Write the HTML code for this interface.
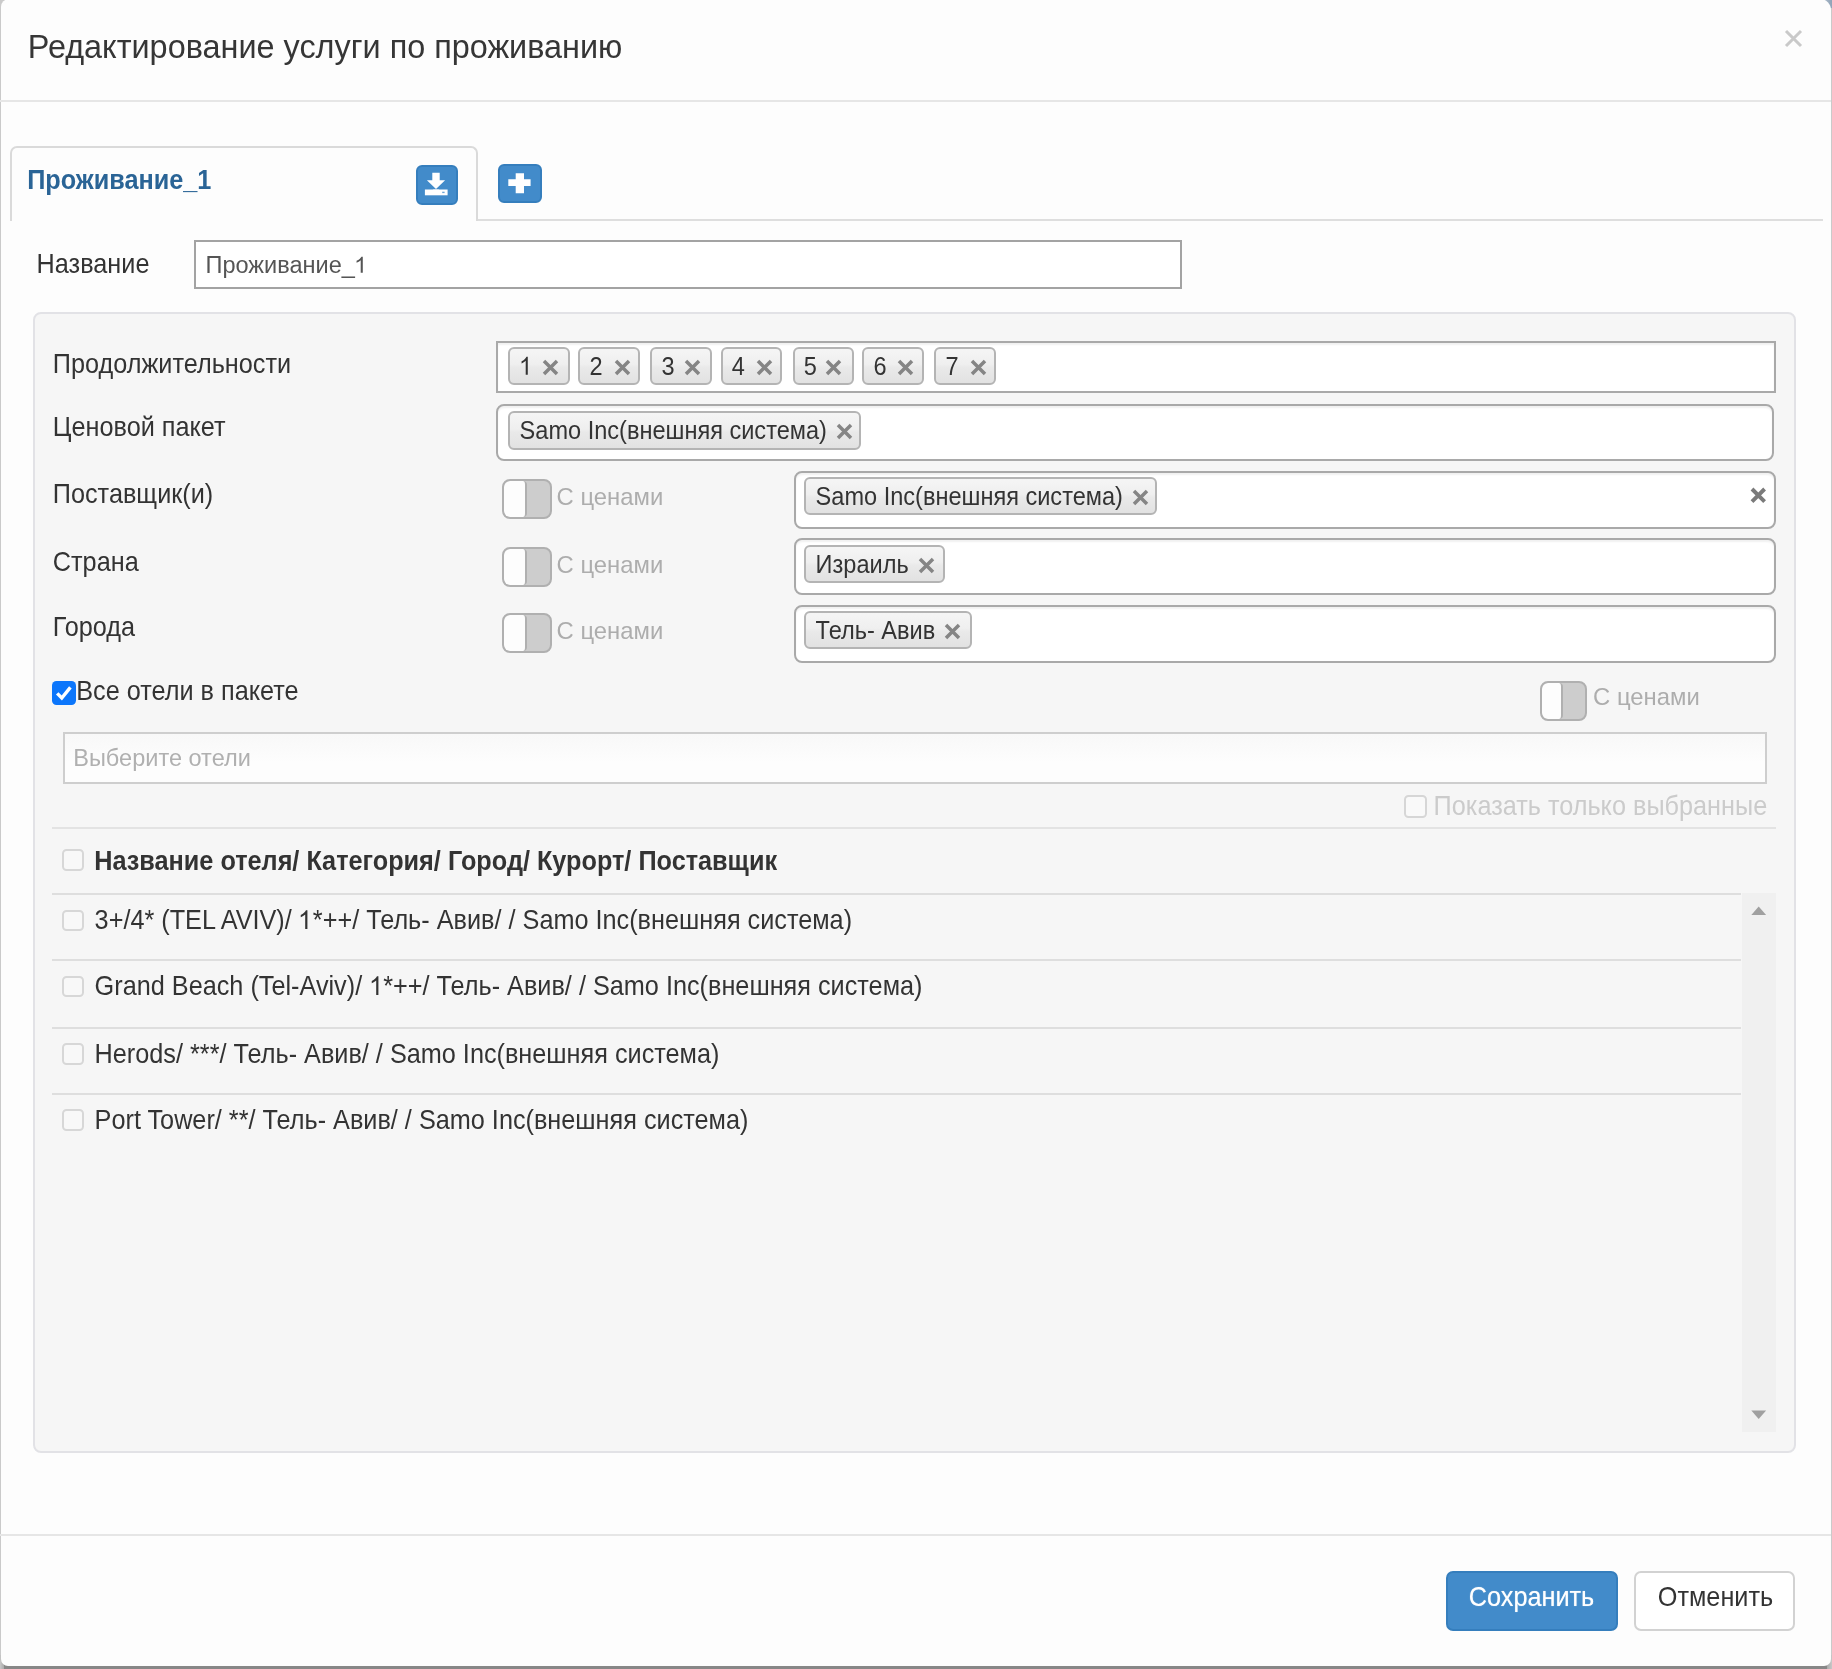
<!DOCTYPE html>
<html lang="ru"><head><meta charset="utf-8"><title>Редактирование услуги по проживанию</title><style>
html,body{margin:0;padding:0;width:1832px;height:1669px;overflow:hidden}
body{width:1832px;height:1669px;overflow:hidden;position:relative;background:#878787;font-family:"Liberation Sans",sans-serif}
.modal{position:absolute;left:1.2px;top:-1px;width:1829.5px;height:1667.3px;background:#fdfdfd;border-radius:8px 11px 7px 7px}
#clip{position:absolute;left:0;top:0;width:1832px;height:1669px;overflow:hidden}
#stage{position:absolute;left:-12px;top:-12px;width:1856px;height:1693px;filter:blur(0.7px)}
#inner{position:absolute;left:12px;top:12px;width:1832px;height:1669px}
.t{position:absolute;white-space:nowrap;line-height:1}
.b{position:absolute;display:block}
</style></head>
<body><div id="clip"><div id="stage"><div id="inner">
<div class="b" style="left:-12px;top:-12px;width:1856px;height:1693px;background:#878787"></div>
<div class="b" style="left:-12px;top:-12px;width:1856px;height:1673px;background:#cacaca"></div>
<div class="b" style="left:0;top:1655px;width:4px;height:14px;background:linear-gradient(90deg,#c8c8c8,#aaa)"></div>
<div class="b" style="left:1827px;top:1655px;width:5px;height:14px;background:linear-gradient(90deg,#aaa,#c8c8c8)"></div>
<div class="b" style="left:1818px;top:0;width:14px;height:8px;background:linear-gradient(90deg,#c4ccd4,#8fa3b8)"></div>
<div class="modal"></div>
<span class="t" style="left:27.70px;top:31.36px;font-size:32.41px;color:#363636;font-weight:normal;transform:scaleY(1.035);transform-origin:0 27.44px;">Редактирование услуги по проживанию</span>
<svg class="b" style="left:1782.10px;top:27.30px" width="23.00" height="23.00" viewBox="-11.50 -11.50 23.00 23.00"><path d="M-7.5 -7.5L7.5 7.5M7.5 -7.5L-7.5 7.5" stroke="#c9c9c9" stroke-width="3.0" fill="none" stroke-linecap="butt"/></svg>
<div class="b" style="left:0.00px;top:100.00px;width:1831.00px;height:2.00px;background:#e6e6e6"></div>
<div class="b" style="left:11.00px;top:219.00px;width:1812.00px;height:2.00px;background:#dedede"></div>
<div class="b" style="left:10.40px;top:145.50px;width:467.30px;height:75.60px;border:2px solid #dadada;border-bottom:0;border-radius:7px 7px 0 0;background:#fdfdfd;box-sizing:border-box"></div>
<span class="t" style="left:27.20px;top:167.63px;font-size:25.25px;color:#2a6496;font-weight:bold;transform:scaleY(1.095);transform-origin:0 21.37px;">Проживание_1</span>
<div class="b" style="left:416.20px;top:165.30px;width:41.90px;height:39.80px;background:#428bca;border:2px solid #357ebd;border-radius:6px;box-sizing:border-box"></div>
<div class="b" style="left:498.20px;top:163.50px;width:43.90px;height:39.50px;background:#428bca;border:2px solid #357ebd;border-radius:6px;box-sizing:border-box"></div>
<span class="t" style="left:36.60px;top:251.63px;font-size:25.25px;color:#333;font-weight:normal;transform:scaleY(1.095);transform-origin:0 21.37px;">Название</span>
<div class="b" style="left:194.20px;top:240.20px;width:987.80px;height:48.40px;border:2px solid #a3a3a3;background:#fff;box-sizing:border-box"></div>
<span class="t" style="left:205.50px;top:253.56px;font-size:23.55px;color:#555;font-weight:normal;transform:scaleY(1.01);transform-origin:0 19.94px;">Проживание_<svg style="display:inline-block;width:0.556em;height:0.672em;vertical-align:baseline;overflow:visible;margin-left:-0.02em;margin-right:0.02em" viewBox="0 -719 556 719" preserveAspectRatio="none"><path d="M373 0H285V-560Q253 -530 202 -500Q150 -469 109 -454V-539Q183 -574 238 -623Q293 -672 316 -719H373Z" fill="currentColor"/></svg></span>
<div class="b" style="left:33.00px;top:311.60px;width:1763.00px;height:1141.00px;background:#f6f6f6;border:2px solid #e2e2e6;border-radius:8px;box-sizing:border-box"></div>
<span class="t" style="left:52.80px;top:351.73px;font-size:25.25px;color:#333;font-weight:normal;transform:scaleY(1.095);transform-origin:0 21.37px;">Продолжительности</span>
<span class="t" style="left:52.80px;top:415.13px;font-size:25.25px;color:#333;font-weight:normal;transform:scaleY(1.095);transform-origin:0 21.37px;">Ценовой пакет</span>
<span class="t" style="left:52.80px;top:481.63px;font-size:25.25px;color:#333;font-weight:normal;transform:scaleY(1.095);transform-origin:0 21.37px;">Поставщик(и)</span>
<span class="t" style="left:52.80px;top:549.63px;font-size:25.25px;color:#333;font-weight:normal;transform:scaleY(1.095);transform-origin:0 21.37px;">Страна</span>
<span class="t" style="left:52.80px;top:615.03px;font-size:25.25px;color:#333;font-weight:normal;transform:scaleY(1.095);transform-origin:0 21.37px;">Города</span>
<div class="b" style="left:496.00px;top:341.20px;width:1280.40px;height:51.80px;border:2px solid #a9a9a9;background:#fff;box-sizing:border-box;box-shadow:inset 0 2px 2px rgba(0,0,0,.06);"></div>
<div class="b" style="left:496.00px;top:403.60px;width:1278.20px;height:57.40px;border:2px solid #a9a9a9;background:#fff;box-sizing:border-box;box-shadow:inset 0 2px 2px rgba(0,0,0,.06);border-radius:8px"></div>
<div class="b" style="left:794.00px;top:471.40px;width:982.40px;height:57.60px;border:2px solid #a9a9a9;background:#fff;box-sizing:border-box;box-shadow:inset 0 2px 2px rgba(0,0,0,.06);border-radius:8px"></div>
<div class="b" style="left:794.00px;top:537.60px;width:982.40px;height:57.40px;border:2px solid #a9a9a9;background:#fff;box-sizing:border-box;box-shadow:inset 0 2px 2px rgba(0,0,0,.06);border-radius:8px"></div>
<div class="b" style="left:794.00px;top:605.20px;width:982.40px;height:57.60px;border:2px solid #a9a9a9;background:#fff;box-sizing:border-box;box-shadow:inset 0 2px 2px rgba(0,0,0,.06);border-radius:8px"></div>
<div class="b" style="left:508.30px;top:346.80px;width:61.30px;height:38.40px;border:2px solid #b4b4b4;border-radius:6px;background:linear-gradient(#f5f5f5 0%,#efefef 45%,#e9e9e9 55%,#e2e2e2 100%);box-sizing:border-box;"></div>
<span class="t" style="left:519.50px;top:356.11px;font-size:23.55px;color:#333;font-weight:normal;transform:scaleY(1.13);transform-origin:0 19.94px;"><svg style="display:inline-block;width:0.556em;height:0.672em;vertical-align:baseline;overflow:visible;margin-left:-0.02em;margin-right:0.02em" viewBox="0 -719 556 719" preserveAspectRatio="none"><path d="M373 0H285V-560Q253 -530 202 -500Q150 -469 109 -454V-539Q183 -574 238 -623Q293 -672 316 -719H373Z" fill="currentColor"/></svg></span>
<svg class="b" style="left:539.65px;top:356.85px" width="21.00" height="21.00" viewBox="-10.50 -10.50 21.00 21.00"><path d="M-6.5 -6.5L6.5 6.5M6.5 -6.5L-6.5 6.5" stroke="#858585" stroke-width="3.5" fill="none" stroke-linecap="butt"/></svg>
<div class="b" style="left:578.25px;top:346.80px;width:61.30px;height:38.40px;border:2px solid #b4b4b4;border-radius:6px;background:linear-gradient(#f5f5f5 0%,#efefef 45%,#e9e9e9 55%,#e2e2e2 100%);box-sizing:border-box;"></div>
<span class="t" style="left:589.45px;top:356.11px;font-size:23.55px;color:#333;font-weight:normal;transform:scaleY(1.13);transform-origin:0 19.94px;">2</span>
<svg class="b" style="left:611.65px;top:356.85px" width="21.00" height="21.00" viewBox="-10.50 -10.50 21.00 21.00"><path d="M-6.5 -6.5L6.5 6.5M6.5 -6.5L-6.5 6.5" stroke="#858585" stroke-width="3.5" fill="none" stroke-linecap="butt"/></svg>
<div class="b" style="left:650.40px;top:346.80px;width:61.30px;height:38.40px;border:2px solid #b4b4b4;border-radius:6px;background:linear-gradient(#f5f5f5 0%,#efefef 45%,#e9e9e9 55%,#e2e2e2 100%);box-sizing:border-box;"></div>
<span class="t" style="left:661.60px;top:356.11px;font-size:23.55px;color:#333;font-weight:normal;transform:scaleY(1.13);transform-origin:0 19.94px;">3</span>
<svg class="b" style="left:681.60px;top:356.85px" width="21.00" height="21.00" viewBox="-10.50 -10.50 21.00 21.00"><path d="M-6.5 -6.5L6.5 6.5M6.5 -6.5L-6.5 6.5" stroke="#858585" stroke-width="3.5" fill="none" stroke-linecap="butt"/></svg>
<div class="b" style="left:720.50px;top:346.80px;width:61.30px;height:38.40px;border:2px solid #b4b4b4;border-radius:6px;background:linear-gradient(#f5f5f5 0%,#efefef 45%,#e9e9e9 55%,#e2e2e2 100%);box-sizing:border-box;"></div>
<span class="t" style="left:731.70px;top:356.11px;font-size:23.55px;color:#333;font-weight:normal;transform:scaleY(1.13);transform-origin:0 19.94px;">4</span>
<svg class="b" style="left:753.80px;top:356.85px" width="21.00" height="21.00" viewBox="-10.50 -10.50 21.00 21.00"><path d="M-6.5 -6.5L6.5 6.5M6.5 -6.5L-6.5 6.5" stroke="#858585" stroke-width="3.5" fill="none" stroke-linecap="butt"/></svg>
<div class="b" style="left:792.60px;top:346.80px;width:61.30px;height:38.40px;border:2px solid #b4b4b4;border-radius:6px;background:linear-gradient(#f5f5f5 0%,#efefef 45%,#e9e9e9 55%,#e2e2e2 100%);box-sizing:border-box;"></div>
<span class="t" style="left:803.80px;top:356.11px;font-size:23.55px;color:#333;font-weight:normal;transform:scaleY(1.13);transform-origin:0 19.94px;">5</span>
<svg class="b" style="left:823.20px;top:356.85px" width="21.00" height="21.00" viewBox="-10.50 -10.50 21.00 21.00"><path d="M-6.5 -6.5L6.5 6.5M6.5 -6.5L-6.5 6.5" stroke="#858585" stroke-width="3.5" fill="none" stroke-linecap="butt"/></svg>
<div class="b" style="left:862.40px;top:346.80px;width:61.30px;height:38.40px;border:2px solid #b4b4b4;border-radius:6px;background:linear-gradient(#f5f5f5 0%,#efefef 45%,#e9e9e9 55%,#e2e2e2 100%);box-sizing:border-box;"></div>
<span class="t" style="left:873.60px;top:356.11px;font-size:23.55px;color:#333;font-weight:normal;transform:scaleY(1.13);transform-origin:0 19.94px;">6</span>
<svg class="b" style="left:895.30px;top:356.85px" width="21.00" height="21.00" viewBox="-10.50 -10.50 21.00 21.00"><path d="M-6.5 -6.5L6.5 6.5M6.5 -6.5L-6.5 6.5" stroke="#858585" stroke-width="3.5" fill="none" stroke-linecap="butt"/></svg>
<div class="b" style="left:934.30px;top:346.80px;width:61.30px;height:38.40px;border:2px solid #b4b4b4;border-radius:6px;background:linear-gradient(#f5f5f5 0%,#efefef 45%,#e9e9e9 55%,#e2e2e2 100%);box-sizing:border-box;"></div>
<span class="t" style="left:945.50px;top:356.11px;font-size:23.55px;color:#333;font-weight:normal;transform:scaleY(1.13);transform-origin:0 19.94px;">7</span>
<svg class="b" style="left:967.70px;top:356.85px" width="21.00" height="21.00" viewBox="-10.50 -10.50 21.00 21.00"><path d="M-6.5 -6.5L6.5 6.5M6.5 -6.5L-6.5 6.5" stroke="#858585" stroke-width="3.5" fill="none" stroke-linecap="butt"/></svg>
<div class="b" style="left:508.40px;top:411.00px;width:352.90px;height:38.50px;border:2px solid #b4b4b4;border-radius:6px;background:linear-gradient(#f5f5f5 0%,#efefef 45%,#e9e9e9 55%,#e2e2e2 100%);box-sizing:border-box;"></div>
<span class="t" style="left:519.60px;top:420.36px;font-size:23.55px;color:#333;font-weight:normal;transform:scaleY(1.06);transform-origin:0 19.94px;">Samo Inc(внешняя система)</span>
<svg class="b" style="left:833.70px;top:421.10px" width="21.00" height="21.00" viewBox="-10.50 -10.50 21.00 21.00"><path d="M-6.5 -6.5L6.5 6.5M6.5 -6.5L-6.5 6.5" stroke="#858585" stroke-width="3.5" fill="none" stroke-linecap="butt"/></svg>
<div class="b" style="left:804.40px;top:477.00px;width:352.80px;height:38.20px;border:2px solid #b4b4b4;border-radius:6px;background:linear-gradient(#f5f5f5 0%,#efefef 45%,#e9e9e9 55%,#e2e2e2 100%);box-sizing:border-box;"></div>
<span class="t" style="left:815.60px;top:486.21px;font-size:23.55px;color:#333;font-weight:normal;transform:scaleY(1.06);transform-origin:0 19.94px;">Samo Inc(внешняя система)</span>
<svg class="b" style="left:1129.60px;top:486.95px" width="21.00" height="21.00" viewBox="-10.50 -10.50 21.00 21.00"><path d="M-6.5 -6.5L6.5 6.5M6.5 -6.5L-6.5 6.5" stroke="#858585" stroke-width="3.5" fill="none" stroke-linecap="butt"/></svg>
<div class="b" style="left:804.40px;top:544.80px;width:141.10px;height:38.30px;border:2px solid #b4b4b4;border-radius:6px;background:linear-gradient(#f5f5f5 0%,#efefef 45%,#e9e9e9 55%,#e2e2e2 100%);box-sizing:border-box;"></div>
<span class="t" style="left:815.60px;top:554.06px;font-size:23.55px;color:#333;font-weight:normal;transform:scaleY(1.06);transform-origin:0 19.94px;">Израиль</span>
<svg class="b" style="left:915.80px;top:554.80px" width="21.00" height="21.00" viewBox="-10.50 -10.50 21.00 21.00"><path d="M-6.5 -6.5L6.5 6.5M6.5 -6.5L-6.5 6.5" stroke="#858585" stroke-width="3.5" fill="none" stroke-linecap="butt"/></svg>
<div class="b" style="left:804.40px;top:611.00px;width:167.30px;height:38.20px;border:2px solid #b4b4b4;border-radius:6px;background:linear-gradient(#f5f5f5 0%,#efefef 45%,#e9e9e9 55%,#e2e2e2 100%);box-sizing:border-box;"></div>
<span class="t" style="left:815.60px;top:620.21px;font-size:23.55px;color:#333;font-weight:normal;transform:scaleY(1.06);transform-origin:0 19.94px;">Тель- Авив</span>
<svg class="b" style="left:941.50px;top:620.95px" width="21.00" height="21.00" viewBox="-10.50 -10.50 21.00 21.00"><path d="M-6.5 -6.5L6.5 6.5M6.5 -6.5L-6.5 6.5" stroke="#858585" stroke-width="3.5" fill="none" stroke-linecap="butt"/></svg>
<svg class="b" style="left:1747.50px;top:485.20px" width="20.60" height="20.60" viewBox="-10.30 -10.30 20.60 20.60"><path d="M-6.3 -6.3L6.3 6.3M6.3 -6.3L-6.3 6.3" stroke="#7a7a7a" stroke-width="3.9" fill="none" stroke-linecap="butt"/></svg>
<div class="b" style="left:502.00px;top:479.30px;width:50.00px;height:39.60px;border:2px solid #b0b0b0;border-radius:8px;background:#cdcdcd;box-sizing:border-box;overflow:hidden"><div style="position:absolute;left:0;top:0;width:21.2px;height:100%;background:#fdfdfd;border-right:2px solid #b0b0b0;border-radius:6px 4px 4px 6px"></div></div>
<span class="t" style="left:556.60px;top:484.61px;font-size:23.85px;color:#adadad;font-weight:normal;transform:scaleY(1.04);transform-origin:0 20.19px;">С ценами</span>
<div class="b" style="left:502.00px;top:547.30px;width:50.00px;height:39.60px;border:2px solid #b0b0b0;border-radius:8px;background:#cdcdcd;box-sizing:border-box;overflow:hidden"><div style="position:absolute;left:0;top:0;width:21.2px;height:100%;background:#fdfdfd;border-right:2px solid #b0b0b0;border-radius:6px 4px 4px 6px"></div></div>
<span class="t" style="left:556.60px;top:552.61px;font-size:23.85px;color:#adadad;font-weight:normal;transform:scaleY(1.04);transform-origin:0 20.19px;">С ценами</span>
<div class="b" style="left:502.00px;top:613.20px;width:50.00px;height:39.60px;border:2px solid #b0b0b0;border-radius:8px;background:#cdcdcd;box-sizing:border-box;overflow:hidden"><div style="position:absolute;left:0;top:0;width:21.2px;height:100%;background:#fdfdfd;border-right:2px solid #b0b0b0;border-radius:6px 4px 4px 6px"></div></div>
<span class="t" style="left:556.60px;top:618.81px;font-size:23.85px;color:#adadad;font-weight:normal;transform:scaleY(1.04);transform-origin:0 20.19px;">С ценами</span>
<div class="b" style="left:1539.80px;top:681.10px;width:47.60px;height:39.60px;border:2px solid #b0b0b0;border-radius:8px;background:#cdcdcd;box-sizing:border-box;overflow:hidden"><div style="position:absolute;left:0;top:0;width:19.6px;height:100%;background:#fdfdfd;border-right:2px solid #b0b0b0;border-radius:6px 4px 4px 6px"></div></div>
<span class="t" style="left:1593.10px;top:684.61px;font-size:23.85px;color:#adadad;font-weight:normal;transform:scaleY(1.04);transform-origin:0 20.19px;">С ценами</span>
<div class="b" style="left:52.30px;top:681.00px;width:23.40px;height:23.50px;background:#0c76fb;border-radius:4.5px"></div>
<svg class="b" style="left:52.3px;top:681px" width="23.4" height="23.5" viewBox="0 0 23.4 23.5"><path d="M5.2 12.4l4.6 4.6 8.6-10.6" stroke="#fff" stroke-width="3.4" fill="none"/></svg>
<span class="t" style="left:76.20px;top:678.83px;font-size:25.25px;color:#333;font-weight:normal;transform:scaleY(1.095);transform-origin:0 21.37px;">Все отели в пакете</span>
<div class="b" style="left:62.60px;top:731.60px;width:1704.80px;height:52.60px;border:2px solid #cecece;background:linear-gradient(#f8f8f8,#fdfdfd 60%);box-sizing:border-box"></div>
<span class="t" style="left:73.20px;top:746.86px;font-size:23.55px;color:#b0b0b0;font-weight:normal;transform:scaleY(0.99);transform-origin:0 19.94px;">Выберите отели</span>
<div class="b" style="left:1403.80px;top:795.20px;width:22.80px;height:22.80px;border:2px solid #d6d6d6;border-radius:4.5px;background:#f9f9f9;box-sizing:border-box"></div>
<span class="t" style="left:1433.60px;top:793.63px;font-size:25.25px;color:#cbcbcb;font-weight:normal;transform:scaleY(1.095);transform-origin:0 21.37px;">Показать только выбранные</span>
<div class="b" style="left:52.00px;top:827.00px;width:1723.50px;height:2.00px;background:#e3e3e3"></div>
<div class="b" style="left:62.20px;top:849.20px;width:21.80px;height:21.80px;border:2px solid #d7d7d7;border-radius:4.5px;background:#f8f8f8;box-sizing:border-box"></div>
<span class="t" style="left:94.20px;top:848.83px;font-size:25.25px;color:#333;font-weight:bold;transform:scaleY(1.095);transform-origin:0 21.37px;">Название отеля/ Категория/ Город/ Курорт/ Поставщик</span>
<div class="b" style="left:52.00px;top:893.00px;width:1689.00px;height:2.00px;background:#dedede"></div>
<div class="b" style="left:62.20px;top:909.60px;width:21.80px;height:21.80px;border:2px solid #d7d7d7;border-radius:4.5px;background:#f8f8f8;box-sizing:border-box"></div>
<span class="t" style="left:94.60px;top:907.73px;font-size:25.25px;color:#333;font-weight:normal;transform:scaleY(1.095);transform-origin:0 21.37px;">3+/4* (TEL AVIV)/ <svg style="display:inline-block;width:0.556em;height:0.672em;vertical-align:baseline;overflow:visible;margin-left:-0.02em;margin-right:0.02em" viewBox="0 -719 556 719" preserveAspectRatio="none"><path d="M373 0H285V-560Q253 -530 202 -500Q150 -469 109 -454V-539Q183 -574 238 -623Q293 -672 316 -719H373Z" fill="currentColor"/></svg>*++/ Тель- Авив/ / Samo Inc(внешняя система)</span>
<div class="b" style="left:62.20px;top:975.70px;width:21.80px;height:21.80px;border:2px solid #d7d7d7;border-radius:4.5px;background:#f8f8f8;box-sizing:border-box"></div>
<span class="t" style="left:94.60px;top:974.03px;font-size:25.25px;color:#333;font-weight:normal;transform:scaleY(1.095);transform-origin:0 21.37px;">Grand Beach (Tel-Aviv)/ <svg style="display:inline-block;width:0.556em;height:0.672em;vertical-align:baseline;overflow:visible;margin-left:-0.02em;margin-right:0.02em" viewBox="0 -719 556 719" preserveAspectRatio="none"><path d="M373 0H285V-560Q253 -530 202 -500Q150 -469 109 -454V-539Q183 -574 238 -623Q293 -672 316 -719H373Z" fill="currentColor"/></svg>*++/ Тель- Авив/ / Samo Inc(внешняя система)</span>
<div class="b" style="left:62.20px;top:1043.30px;width:21.80px;height:21.80px;border:2px solid #d7d7d7;border-radius:4.5px;background:#f8f8f8;box-sizing:border-box"></div>
<span class="t" style="left:94.60px;top:1041.63px;font-size:25.25px;color:#333;font-weight:normal;transform:scaleY(1.095);transform-origin:0 21.37px;">Herods/ ***/ Тель- Авив/ / Samo Inc(внешняя система)</span>
<div class="b" style="left:62.20px;top:1109.40px;width:21.80px;height:21.80px;border:2px solid #d7d7d7;border-radius:4.5px;background:#f8f8f8;box-sizing:border-box"></div>
<span class="t" style="left:94.60px;top:1107.53px;font-size:25.25px;color:#333;font-weight:normal;transform:scaleY(1.095);transform-origin:0 21.37px;">Port Tower/ **/ Тель- Авив/ / Samo Inc(внешняя система)</span>
<div class="b" style="left:52.00px;top:959.00px;width:1689.00px;height:2.00px;background:#dedede"></div>
<div class="b" style="left:52.00px;top:1027.00px;width:1689.00px;height:2.00px;background:#dedede"></div>
<div class="b" style="left:52.00px;top:1093.00px;width:1689.00px;height:2.00px;background:#dedede"></div>
<div class="b" style="left:1741.60px;top:893.00px;width:34.00px;height:539.20px;background:#f0f0f0"></div>
<div class="b" style="left:0.00px;top:1534.00px;width:1831.00px;height:2.00px;background:#e6e6e6"></div>
<div class="b" style="left:1445.80px;top:1570.60px;width:172.20px;height:60.00px;background:#428bca;border:2px solid #357ebd;border-radius:7px;box-sizing:border-box"></div>
<span class="t" style="left:1468.80px;top:1584.63px;font-size:25.25px;color:#fff;font-weight:normal;transform:scaleY(1.095);transform-origin:0 21.37px;text-shadow:0 0 1px rgba(255,255,255,.6)">Сохранить</span>
<div class="b" style="left:1634.00px;top:1570.60px;width:161.40px;height:60.00px;background:#fff;border:2px solid #d2d2d2;border-radius:7px;box-sizing:border-box"></div>
<span class="t" style="left:1657.80px;top:1584.63px;font-size:25.25px;color:#333;font-weight:normal;transform:scaleY(1.095);transform-origin:0 21.37px;">Отменить</span>
<svg class="b" style="left:0;top:0" width="1832" height="1669" viewBox="0 0 1832 1669"><path d="M432.3 172.8h7.4v7.4h5.4l-9.1 8.9-9.1-8.9h5.4z" fill="#fff"/><rect x="424.9" y="189.5" width="22.7" height="5.8" fill="#fff"/><path d="M432.6 189.5h6.8l-3.4 2.2z" fill="#fff"/><rect x="442.2" y="191.7" width="2.4" height="1.4" fill="#6ea6d8"/><path d="M515.7 173.2h8.3v6.1h6.6v6.6h-6.6v7.4h-8.3v-7.400h-7.400v-6.6h7.400z" fill="#fff"/><path d="M1758.7 906.5l7.400 8.500h-14.800z" fill="#a0a0a0"/><path d="M1758.7 1419.1l7.400-8.500h-14.800z" fill="#a0a0a0"/></svg>
</div></div></div></body></html>
